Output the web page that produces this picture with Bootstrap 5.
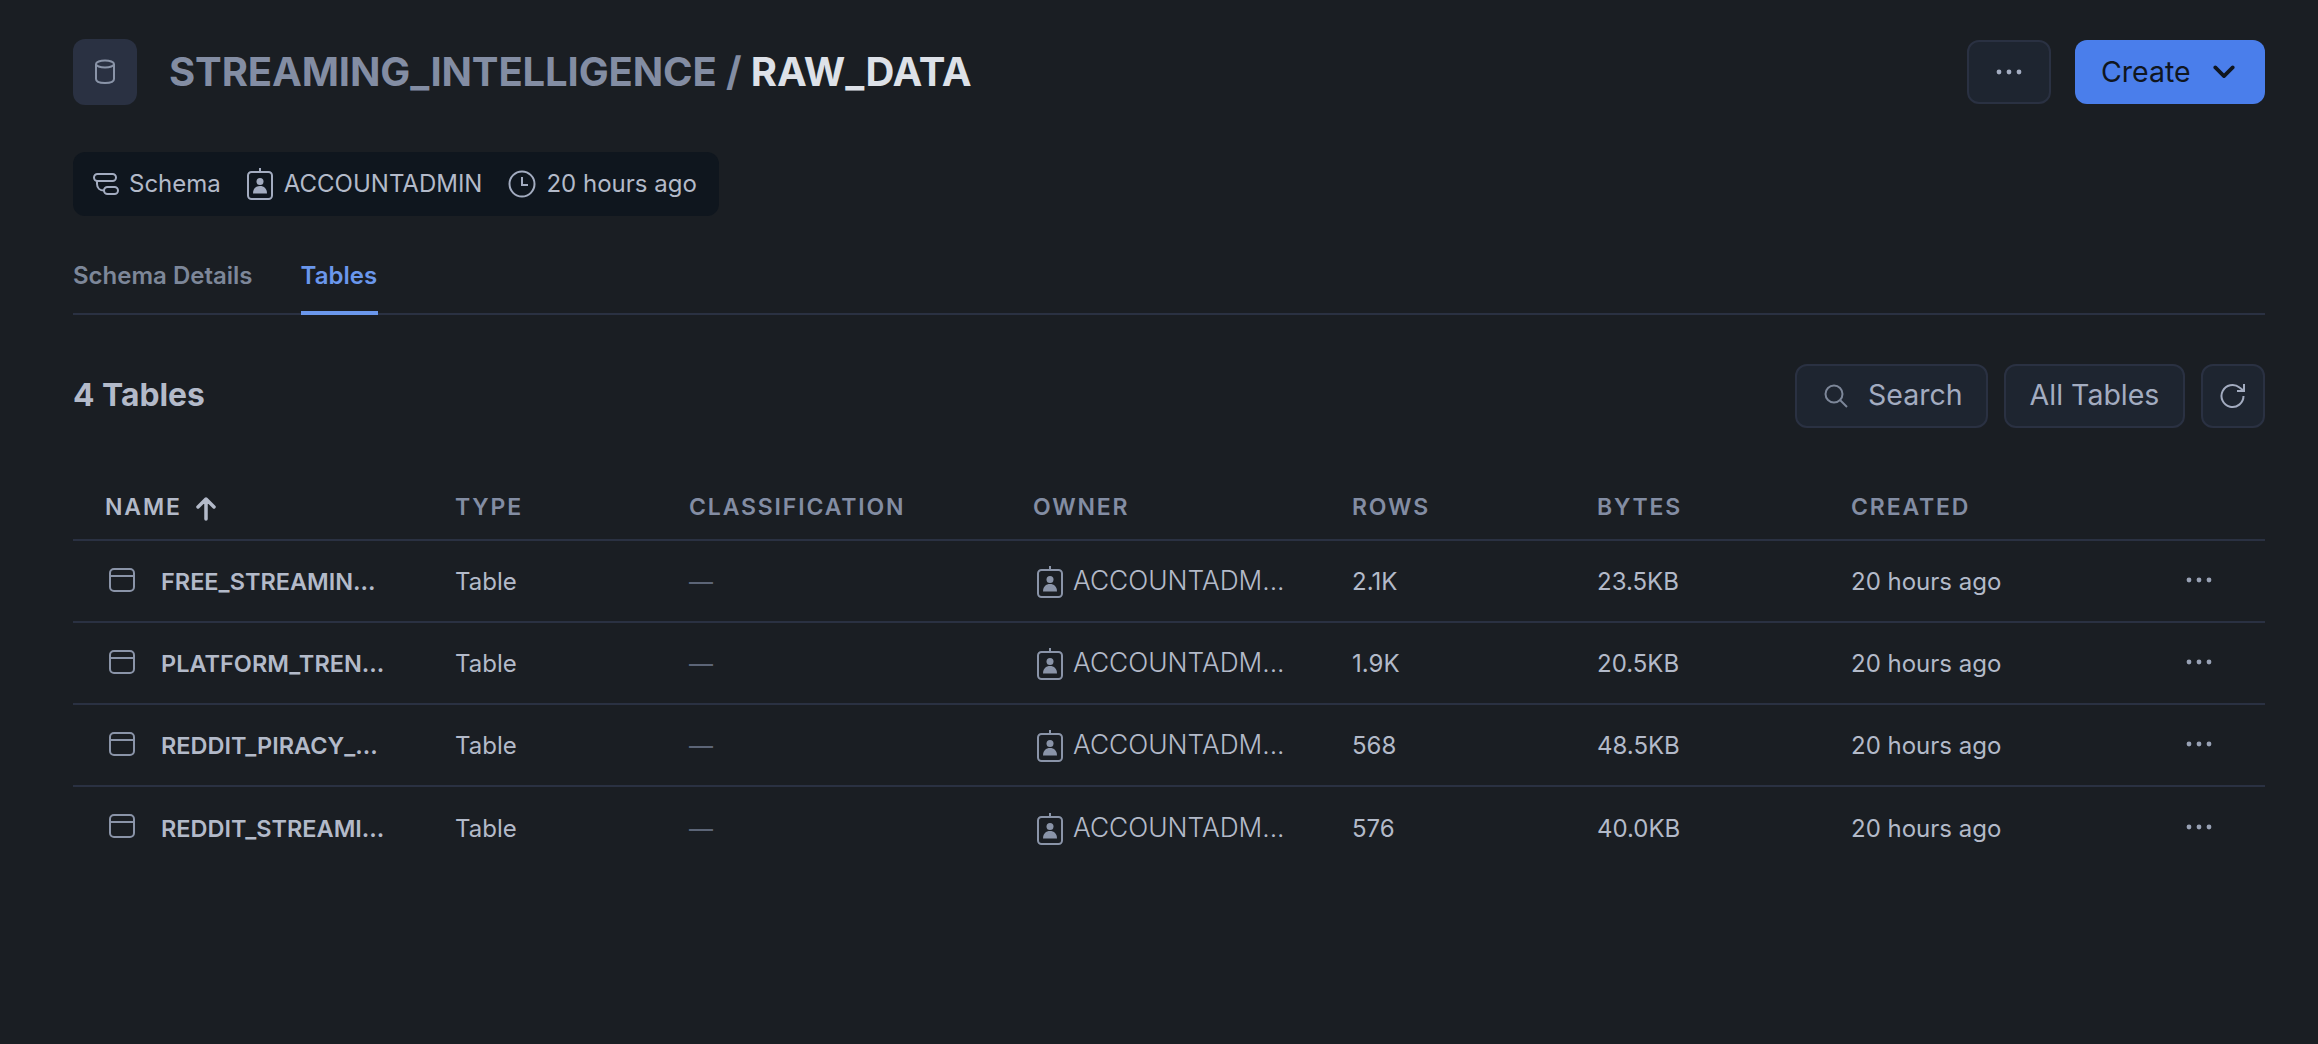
<!DOCTYPE html>
<html lang="en">
<head>
    <meta charset="UTF-8">
    <title>RAW_DATA</title>
    <link href="https://cdn.jsdelivr.net/npm/bootstrap@5.3.0/dist/css/bootstrap.min.css" rel="stylesheet">
    <style>
        body { background: #1a1e23; font-family: Inter, "Liberation Sans", sans-serif; color: #b3bac9; min-height: 1044px; }
        .page-wrap { padding: 39px 53px 0 73px; }
        .head-row { height: 66px; }
        .db-box { width: 64px; height: 66px; background: #2a3142; border-radius: 12px; color: #8a94a8; }
        .page-title { font-size: 40px; font-weight: 700; margin: 0 0 0 32px; color: #838da3; letter-spacing: -0.13px; }
        .page-title b { font-weight: 700; color: #dde1e8; }
        .tool-btn { height: 64px; background: #1e2530; border: 2px solid #2a3142; border-radius: 12px; color: #a3acc0; font-size: 28.5px; padding: 0 26px; }
        .tool-btn:hover { background: #1e2530; border-color: #2a3142; color: #a3acc0; }
        .dots-btn { width: 84px; margin-right: 24px; }
        .search-btn { width: 193px; padding: 0 0 0 27px; }
        .search-btn span { margin-left: 20px; }
        .filter-btn { width: 181px; padding: 0; margin-left: 16px; }
        .refresh-btn { width: 64px; padding: 0; margin-left: 16px; }
        .create-btn { width: 190px; height: 64px; background: #4a7eeb; border: 0; border-radius: 12px; color: #10161f; font-size: 28.5px; padding: 0 0 0 26px; }
        .create-btn:hover { background: #4a7eeb; color: #10161f; }
        .create-btn svg { margin-left: 22px; }
        .meta-bar { width: 646px; height: 64px; margin-top: 47px; padding: 0 0 0 20px; background: #0f161e; border-radius: 12px; font-size: 24px; color: #b3bac9; white-space: nowrap; }
        .meta-bar span { margin-left: 10px; }
        .meta-bar svg + span + svg { margin-left: 26px; }
        .meta-bar .owner-name { margin-left: 11px; }
        .tab-row { margin-top: 32px; border-bottom: 2px solid #2a3142; height: 67px; gap: 48px; }
        .tab-item { font-size: 24px; font-weight: 600; color: #7d8799; height: 67px; padding-top: 10px; }
        .tab-item.on { color: #6a97ec; border-bottom: 4px solid #6a97ec; width: 77px; }
        .count-row { margin-top: 48px; height: 65px; }
        .count-title { font-size: 31.800px; font-weight: 700; color: #b3bac9; margin: 0; }
        .data-table { table-layout: fixed; width: 100%; margin: 46px 0 0; --bs-table-bg: transparent; --bs-table-color: #b3bac9; font-size: 24px; }
        .data-table th { height: 66px; padding: 2px 0 0; vertical-align: middle; border-bottom: 2px solid #2a3142; font-size: 23px; font-weight: 600; letter-spacing: 1.85px; color: #838da3; }
        .data-table th.sorted { color: #b3bac9; padding-left: 32px; }
        .data-table th svg { margin-left: 6px; }
        .data-table td { height: 82px; padding: 2px 0 0; vertical-align: middle; border-bottom: 2px solid #2a3142; background: transparent; color: #b3bac9; }
        .data-table tr:last-child td { border-bottom: 0; }
        .data-table td.first { padding-left: 36px; font-size: 23.5px; font-weight: 600; }
        .data-table td.first svg { margin-right: 26px; position: relative; top: -4px; }
        .data-table td.owner { font-size: 26.3px; font-weight: 300; padding-top: 0; }
        .data-table td.owner svg { margin: 0 10px 0 4px; position: relative; top: -1px; }
        .data-table .dash { color: #5c6577; }
        .data-table td.row-dots { color: #98a1b4; padding-left: 11px; padding-top: 0; }
        .row-dots svg { position: relative; top: -2px; }
    </style>
</head>
<body>
<svg width="0" height="0" class="d-block position-absolute">
    <symbol id="i-badge" viewBox="0 0 26 32"><path d="M13 0v4" stroke="currentColor" stroke-width="2" fill="none"/><rect x="1" y="4" width="24" height="27" rx="3.5" stroke="currentColor" stroke-width="2" fill="none"/><circle cx="13" cy="13.5" r="3.5" fill="currentColor"/><path d="M6 25.5c0-5 3-7.5 7-7.5s7 2.500 7 7.500z" fill="currentColor"/></symbol>
    <symbol id="i-table" viewBox="0 0 26 24"><rect x="1" y="1" width="24" height="22" rx="4" stroke="currentColor" stroke-width="2" fill="none"/><path d="M1 8h24" stroke="currentColor" stroke-width="2"/></symbol>
    <symbol id="i-dots" viewBox="0 0 26 6"><circle cx="3" cy="3" r="2.400" fill="currentColor"/><circle cx="13" cy="3" r="2.400" fill="currentColor"/><circle cx="23" cy="3" r="2.400" fill="currentColor"/></symbol>
</svg>
<div class="page-wrap">
    <div class="d-flex align-items-center head-row">
        <div class="db-box d-flex align-items-center justify-content-center">
            <svg width="22" height="26" viewBox="0 0 22 26" fill="none" stroke="currentColor" stroke-width="2"><ellipse cx="11" cy="5" rx="9" ry="3.500"/><path d="M2 5v15c0 2.500 4 4 9 4s9-1.500 9-4V5"/></svg>
        </div>
        <h1 class="page-title">STREAMING_INTELLIGENCE / <b>RAW_DATA</b></h1>
        <button class="btn tool-btn dots-btn ms-auto d-flex align-items-center justify-content-center">
            <svg width="26" height="6"><use href="#i-dots"/></svg>
        </button>
        <button class="btn create-btn d-flex align-items-center">Create
            <svg width="22" height="14" viewBox="0 0 24 15" fill="none" stroke="currentColor" stroke-width="4" stroke-linecap="round" stroke-linejoin="round"><path d="M2.500 2.500L12 12l9.500-9.500"/></svg>
        </button>
    </div>

    <div class="meta-bar d-flex align-items-center">
        <svg width="26" height="24" viewBox="0 0 26 24" fill="none" stroke="#a3acc0" stroke-width="2"><rect x="1" y="2" width="22" height="7" rx="3.500"/><rect x="11" y="15" width="14" height="7" rx="3.500"/><path d="M4 9v3c0 4 3 6.500 7 6.500"/></svg>
        <span>Schema</span>
        <svg width="26" height="32" color="#a3acc0"><use href="#i-badge"/></svg>
        <span class="owner-name">ACCOUNTADMIN</span>
        <svg width="28" height="28" viewBox="0 0 28 28" fill="none" stroke="#a3acc0" stroke-width="2"><circle cx="14" cy="14" r="12.500"/><path d="M14 7v8h6"/></svg>
        <span>20 hours ago</span>
    </div>

    <div class="d-flex tab-row">
        <div class="tab-item">Schema Details</div>
        <div class="tab-item on">Tables</div>
    </div>

    <div class="d-flex align-items-center count-row">
        <h2 class="count-title me-auto">4 Tables</h2>
        <button class="btn tool-btn search-btn d-flex align-items-center">
            <svg width="24" height="24" viewBox="0 0 24 24" fill="none" stroke="#7d8799" stroke-width="2"><circle cx="10" cy="10" r="8.500"/><path d="M16 16l7 7"/></svg>
            <span>Search</span>
        </button>
        <button class="btn tool-btn filter-btn">All Tables</button>
        <button class="btn tool-btn refresh-btn d-flex align-items-center justify-content-center">
            <svg width="26" height="26" viewBox="0 0 26 26" fill="none" stroke="#a3acc0" stroke-width="2"><path d="M23.500 13A11 11 0 1 1 19.500 4.500L24 8"/><path d="M24 1v7h-7"/></svg>
        </button>
    </div>

    <table class="table data-table">
        <colgroup>
            <col style="width:382px"><col style="width:234px"><col style="width:344px"><col style="width:319px"><col style="width:245px"><col style="width:254px"><col style="width:324px"><col>
        </colgroup>
        <thead>
            <tr>
                <th class="sorted">NAME
                    <svg class="align-text-bottom" width="22" height="24" viewBox="0 0 22 24" fill="none" stroke="currentColor" stroke-width="3.500" stroke-linecap="round" stroke-linejoin="round"><path d="M11 22V3M3 10l8-8 8 8"/></svg>
                </th>
                <th>TYPE</th><th>CLASSIFICATION</th><th>OWNER</th><th>ROWS</th><th>BYTES</th><th>CREATED</th><th></th>
            </tr>
        </thead>
        <tbody id="tableRows"></tbody>
    </table>
</div>
<script>
const rows = [
    ['FREE_STREAMIN...', '2.1K', '23.5KB'],
    ['PLATFORM_TREN...', '1.9K', '20.5KB'],
    ['REDDIT_PIRACY_...', '568', '48.5KB'],
    ['REDDIT_STREAMI...', '576', '40.0KB']
];
document.getElementById('tableRows').innerHTML = rows.map(r => `
    <tr>
        <td class="first"><svg width="26" height="24" color="#8a94a8"><use href="#i-table"/></svg>${r[0]}</td>
        <td>Table</td>
        <td class="dash">—</td>
        <td class="owner"><svg width="26" height="32" color="#8a94a8"><use href="#i-badge"/></svg>ACCOUNTADM...</td>
        <td>${r[1]}</td>
        <td>${r[2]}</td>
        <td>20 hours ago</td>
        <td class="row-dots"><svg width="26" height="6"><use href="#i-dots"/></svg></td>
    </tr>`).join('');
</script>
<script src="https://cdn.jsdelivr.net/npm/bootstrap@5.3.0/dist/js/bootstrap.bundle.min.js"></script>
</body>
</html>
